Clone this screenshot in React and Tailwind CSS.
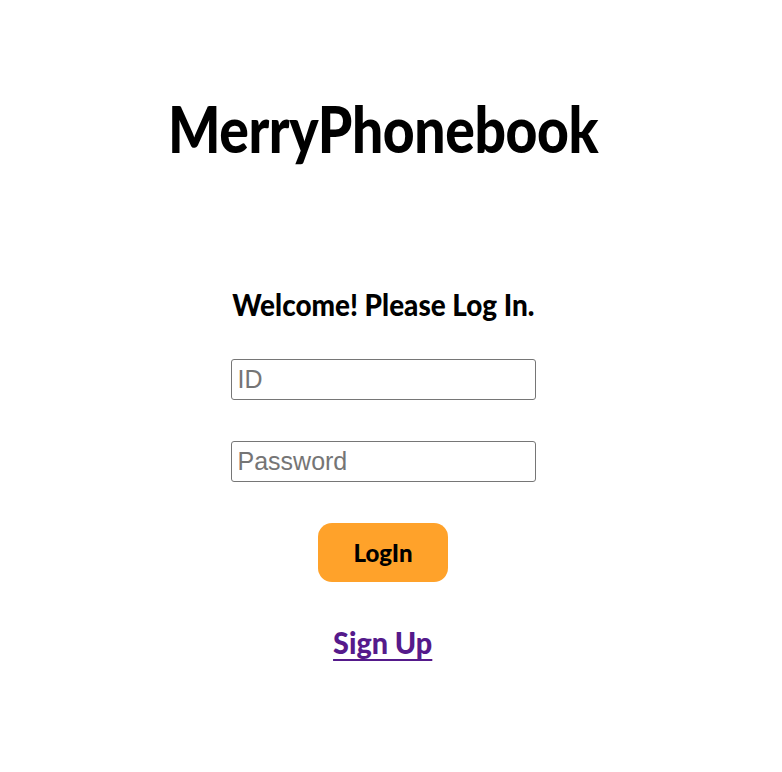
export default function App() {
  return (
    <div className="w-[766px] h-[772px] bg-white flex flex-col items-center">
      <h1 className="mt-[88px] text-[65px] leading-[80px] font-black text-black font-['Lato',sans-serif] scale-x-[0.85] tracking-[-0.5px]">MerryPhonebook</h1>
      <h2 className="mt-[119px] text-[30px] leading-[34px] font-black text-black font-['Lato',sans-serif] scale-x-[0.93]">Welcome! Please Log In.</h2>
      <input
        placeholder="ID"
        className="mt-[38px] w-[305px] h-[41px] border border-[#767676] rounded-[3px] px-[6px] text-[25px] placeholder-[#757575] outline-none font-['Liberation_Sans',Arial,sans-serif]"
      />
      <input
        placeholder="Password"
        type="password"
        className="mt-[41px] w-[305px] h-[41px] border border-[#767676] rounded-[3px] px-[6px] text-[25px] placeholder-[#757575] outline-none font-['Liberation_Sans',Arial,sans-serif]"
      />
      <button className="mt-[41px] w-[130px] h-[59px] rounded-[14px] bg-[#FFA22A] text-black text-[24px] font-black font-['Lato',sans-serif]">LogIn</button>
      <a href="#" className="mt-[40px] text-[30px] font-black text-[#551A8B] underline decoration-2 underline-offset-[5px] leading-[40px] font-['Lato',sans-serif] scale-x-[0.96]">Sign Up</a>
    </div>
  );
}
